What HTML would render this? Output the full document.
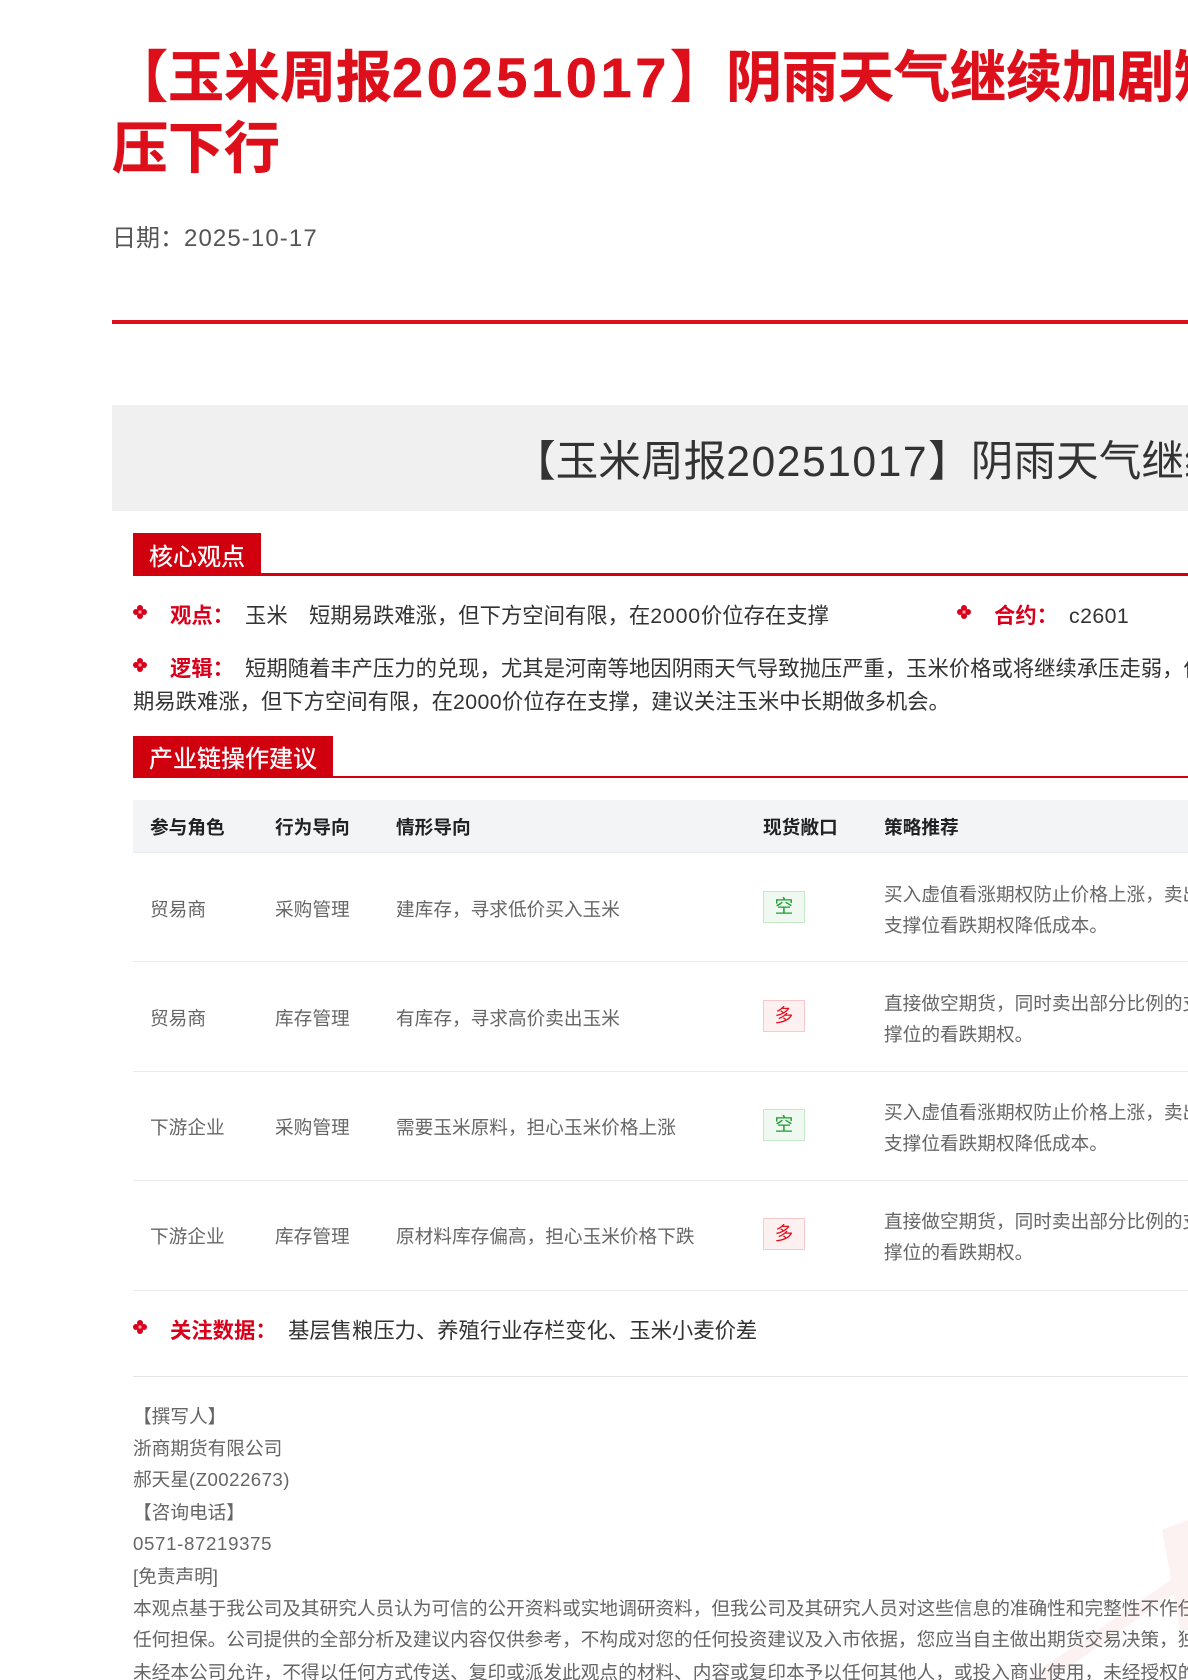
<!DOCTYPE html>
<html lang="zh-CN"><head><meta charset="utf-8"><title>玉米周报</title>
<style>
html,body{margin:0;padding:0;background:#fff;width:1188px;height:1680px;overflow:hidden}
body{position:relative;font-family:"Liberation Sans","Noto Sans CJK SC",sans-serif}
#p{position:absolute;left:0;top:0;width:1188px;height:1680px;overflow:hidden;filter:blur(.3px)}
.t{position:absolute;white-space:nowrap;line-height:32px;height:32px}
.c{right:0;overflow:hidden}
.b{position:absolute}
.body{font-size:21.33px;color:#333}
.lab{font-size:21.33px;color:#d9001b;font-weight:bold}
.th{font-size:18.67px;color:#222;font-weight:bold}
.td{font-size:18.67px;color:#666}
.tab{position:absolute;left:133px;background:#d0000f;color:#fff;font-size:24px;padding-left:16px;box-sizing:border-box;-webkit-text-stroke:.3px #fff}
.tab span{position:relative;top:3px}
.bd{position:absolute;left:763px;width:42px;height:32px;box-sizing:border-box;line-height:30px;text-align:center;font-size:18.67px;border:1px solid}
.g{background:#f0f9f1;border-color:#c4e8c8;color:#1a9e2e}
.r{background:#fdf0f1;border-color:#f9c8cb;color:#e0101c}
.ln{position:absolute;left:133px;width:1055px;height:1px;background:#e8ecf0}
.d{position:absolute;width:14px;height:14px}
.h1{height:72px;line-height:72px;font-size:56px;font-weight:bold;color:#dc0f1a;-webkit-text-stroke:.5px #dc0f1a}
</style></head><body><div id="p">
<svg class="b" style="left:1000px;top:1500px" width="188" height="180" viewBox="0 0 188 180"><path d="M25 180L188 68V84L50 180Z M162 30L188 20V130L180 130Z" fill="#fdf2f2"/></svg>

<div class="t c h1" style="left:112px;top:42px">【玉米周报<span style="letter-spacing:3.6px">20251017</span>】阴雨天气继续加剧短期玉米承</div>
<div class="t h1" style="left:112px;top:113px">压下行</div>
<div class="t" style="left:112px;top:223px;font-size:24px;color:#555">日期：<span style="letter-spacing:1.1px">2025-10-17</span></div>
<div class="b" style="left:112px;top:320px;width:1076px;height:4px;background:#dc0f1a"></div>

<div class="b" style="left:112px;top:405px;width:1076px;height:106px;background:#f0f0f0"></div>
<div class="t c" style="left:513px;top:434px;height:56px;line-height:56px;font-size:42.67px;color:#333">【玉米周报<span style="letter-spacing:1.5px">20251017</span>】阴雨天气继续加剧</div>

<div class="b" style="left:133px;top:573px;width:1055px;height:3px;background:#d0000f"></div>
<div class="tab" style="top:533px;width:128px;height:43px;line-height:43px"><span>核心观点</span></div>

<svg class="d" style="left:133px;top:605px" viewBox="0 0 14 14"><g fill="#d9001b"><circle cx="7" cy="3" r="3"/><circle cx="7" cy="11" r="3"/><circle cx="3" cy="7" r="3"/><circle cx="11" cy="7" r="3"/></g><circle cx="7" cy="7" r="1.6" fill="#f6a0a6"/></svg>
<div class="t lab" style="left:170px;top:600px">观点：</div>
<div class="t body" style="left:245px;top:600px">玉米</div>
<div class="t body" style="left:309px;top:600px">短期易跌难涨，但下方空间有限，在<span style="letter-spacing:.8px">2000</span>价位存在支撑</div>
<svg class="d" style="left:957px;top:605px" viewBox="0 0 14 14"><g fill="#d9001b"><circle cx="7" cy="3" r="3"/><circle cx="7" cy="11" r="3"/><circle cx="3" cy="7" r="3"/><circle cx="11" cy="7" r="3"/></g><circle cx="7" cy="7" r="1.6" fill="#f6a0a6"/></svg>
<div class="t lab" style="left:994px;top:600px">合约：</div>
<div class="t body" style="left:1069px;top:600px;letter-spacing:.4px">c2601</div>

<svg class="d" style="left:133px;top:658px" viewBox="0 0 14 14"><g fill="#d9001b"><circle cx="7" cy="3" r="3"/><circle cx="7" cy="11" r="3"/><circle cx="3" cy="7" r="3"/><circle cx="11" cy="7" r="3"/></g><circle cx="7" cy="7" r="1.6" fill="#f6a0a6"/></svg>
<div class="t lab" style="left:170px;top:653px">逻辑：</div>
<div class="t body c" style="left:245px;top:653px">短期随着丰产压力的兑现，尤其是河南等地因阴雨天气导致抛压严重，玉米价格或将继续承压走弱，但</div>
<div class="t body" style="left:133px;top:686px">期易跌难涨，但下方空间有限，在<span style="letter-spacing:.4px">2000</span>价位存在支撑，建议关注玉米中长期做多机会。</div>

<div class="b" style="left:133px;top:776px;width:1055px;height:2px;background:#d0000f"></div>
<div class="tab" style="top:736px;width:200px;height:42px;line-height:42px"><span>产业链操作建议</span></div>

<div class="b" style="left:133px;top:800px;width:1055px;height:52px;background:#f3f4f6"></div>
<div class="ln" style="top:852px"></div>
<div class="t th" style="left:150px;top:812px">参与角色</div>
<div class="t th" style="left:275px;top:812px">行为导向</div>
<div class="t th" style="left:396px;top:812px">情形导向</div>
<div class="t th" style="left:763px;top:812px">现货敞口</div>
<div class="t th" style="left:884px;top:812px">策略推荐</div>

<div class="t td" style="left:150px;top:894px">贸易商</div>
<div class="t td" style="left:275px;top:894px">采购管理</div>
<div class="t td" style="left:396px;top:894px">建库存，寻求低价买入玉米</div>
<div class="bd g" style="top:891px">空</div>
<div class="t td c" style="left:884px;top:879px">买入虚值看涨期权防止价格上涨，卖出</div>
<div class="t td" style="left:884px;top:910px">支撑位看跌期权降低成本。</div>
<div class="ln" style="top:961px"></div>

<div class="t td" style="left:150px;top:1003px">贸易商</div>
<div class="t td" style="left:275px;top:1003px">库存管理</div>
<div class="t td" style="left:396px;top:1003px">有库存，寻求高价卖出玉米</div>
<div class="bd r" style="top:1000px">多</div>
<div class="t td c" style="left:884px;top:988px">直接做空期货，同时卖出部分比例的支</div>
<div class="t td" style="left:884px;top:1019px">撑位的看跌期权。</div>
<div class="ln" style="top:1071px"></div>

<div class="t td" style="left:150px;top:1112px">下游企业</div>
<div class="t td" style="left:275px;top:1112px">采购管理</div>
<div class="t td" style="left:396px;top:1112px">需要玉米原料，担心玉米价格上涨</div>
<div class="bd g" style="top:1109px">空</div>
<div class="t td c" style="left:884px;top:1097px">买入虚值看涨期权防止价格上涨，卖出</div>
<div class="t td" style="left:884px;top:1128px">支撑位看跌期权降低成本。</div>
<div class="ln" style="top:1180px"></div>

<div class="t td" style="left:150px;top:1221px">下游企业</div>
<div class="t td" style="left:275px;top:1221px">库存管理</div>
<div class="t td" style="left:396px;top:1221px">原材料库存偏高，担心玉米价格下跌</div>
<div class="bd r" style="top:1218px">多</div>
<div class="t td c" style="left:884px;top:1206px">直接做空期货，同时卖出部分比例的支</div>
<div class="t td" style="left:884px;top:1237px">撑位的看跌期权。</div>
<div class="ln" style="top:1290px"></div>

<svg class="d" style="left:133px;top:1320px" viewBox="0 0 14 14"><g fill="#d9001b"><circle cx="7" cy="3" r="3"/><circle cx="7" cy="11" r="3"/><circle cx="3" cy="7" r="3"/><circle cx="11" cy="7" r="3"/></g><circle cx="7" cy="7" r="1.6" fill="#f6a0a6"/></svg>
<div class="t lab" style="left:170px;top:1315px">关注数据：</div>
<div class="t body" style="left:288px;top:1315px">基层售粮压力、养殖行业存栏变化、玉米小麦价差</div>
<div class="ln" style="top:1376px;background:#e5e5e5"></div>

<div class="t td" style="left:133px;top:1401px">【撰写人】</div>
<div class="t td" style="left:133px;top:1433px">浙商期货有限公司</div>
<div class="t td" style="left:133px;top:1464px">郝天星<span style="letter-spacing:.45px">(Z0022673)</span></div>
<div class="t td" style="left:133px;top:1497px">【咨询电话】</div>
<div class="t td" style="left:133px;top:1528px;letter-spacing:.65px">0571-87219375</div>
<div class="t td" style="left:133px;top:1561px">[免责声明]</div>
<div class="t td c" style="left:133px;top:1593px">本观点基于我公司及其研究人员认为可信的公开资料或实地调研资料，但我公司及其研究人员对这些信息的准确性和完整性不作任何保证</div>
<div class="t td c" style="left:133px;top:1624px">任何担保。公司提供的全部分析及建议内容仅供参考，不构成对您的任何投资建议及入市依据，您应当自主做出期货交易决策，独立判断</div>
<div class="t td c" style="left:133px;top:1657px">未经本公司允许，不得以任何方式传送、复印或派发此观点的材料、内容或复印本予以任何其他人，或投入商业使用，未经授权的行为</div>
</div></body></html>
